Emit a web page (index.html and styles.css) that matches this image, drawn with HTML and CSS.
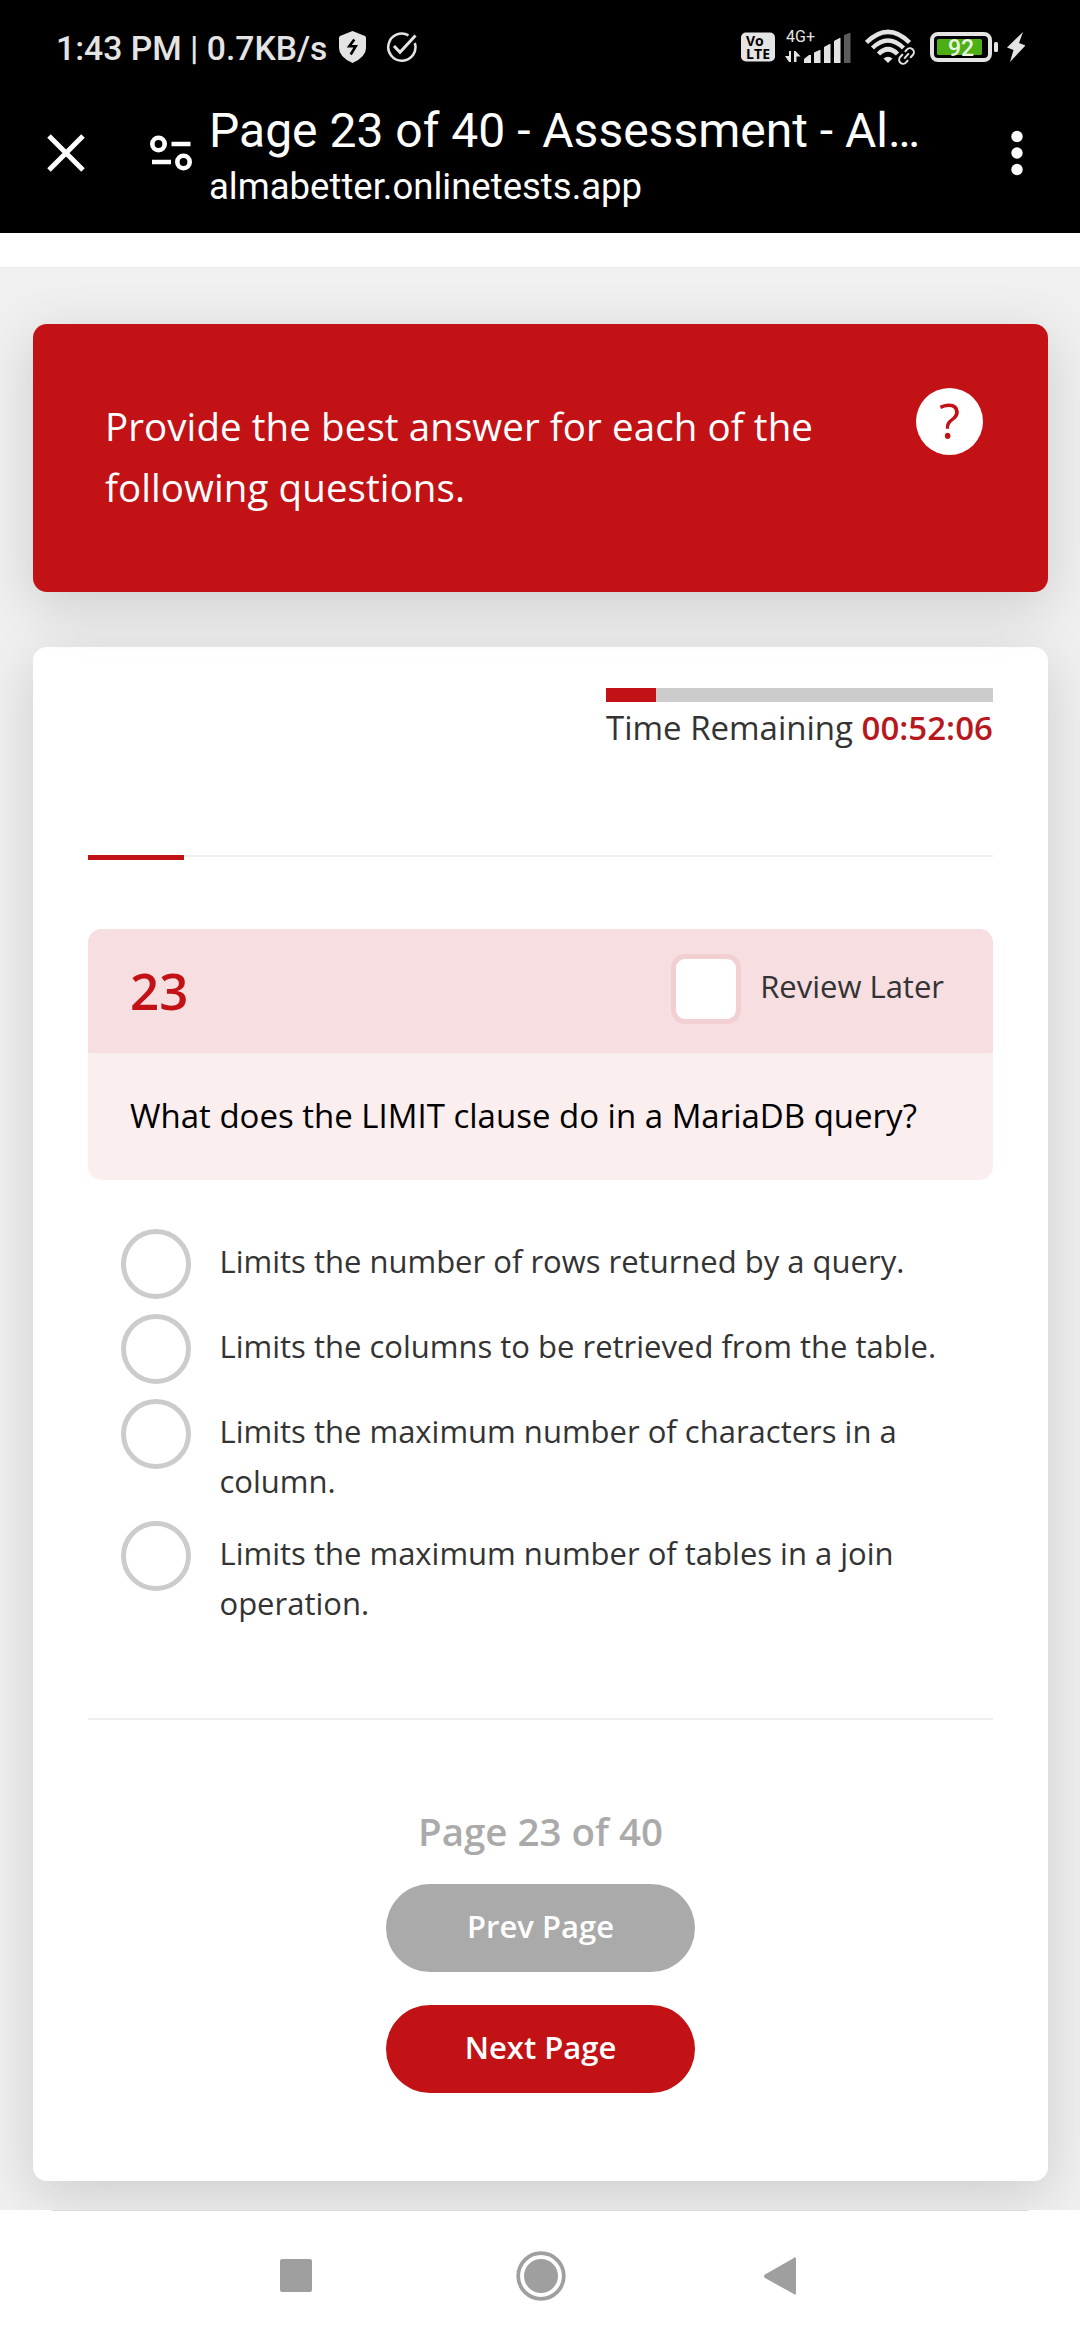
FILE: index.html
```
<!DOCTYPE html>
<html lang="en">
<head>
<meta charset="utf-8">
<title>Page 23 of 40 - Assessment</title>
<link rel="stylesheet" href="styles.css">
</head>
<body>
<div class="screen">
  <header class="browser">
    <div class="status">
      <span class="clock">1:43 PM | 0.7KB/s</span>
      <svg class="shield" width="27" height="32" viewBox="0 0 27 32"><path d="M13.500 0 26 5Q27 5.500 27 7V17Q27 26 13.500 32Q0 26 0 17V7Q0 5.500 1 5Z" fill="#e4e4e4"/><path d="M15.300 8.500 10.300 15.300H16.700L11.700 23.500" fill="none" stroke="#000" stroke-width="2.600"/></svg>
      <svg class="check" width="32" height="32" viewBox="0 0 32 32" fill="none" stroke="#e4e4e4" stroke-width="2.500"><path d="M22.500 4.300A13.600 13.600 0 1 0 28.800 12"/><path d="M8 15 14 21.300 29.500 4.500" stroke-width="3"/></svg>
      <svg class="volte" width="34" height="30" viewBox="0 0 34 30"><rect y=".5" width="34" height="29" rx="5" fill="#e4e4e4"/><text x="5" y="14" class="volte-text">Vo</text><text x="5" y="26.500" class="volte-text" textLength="24">LTE</text></svg>
      <svg class="signal" width="67" height="44" viewBox="0 -5 67 44" fill="#e4e4e4"><text x="1" y="12" class="net-text" textLength="29">4G+</text><path d="M4 21H6V32H4L0 26H4ZM9 21H10.500L15.500 26.500H11.500V32H9Z"/><path d="M19 33V29L24 25H26V33ZM29 33V22.500L34.500 20H35.500V33ZM39 33V17L44.500 14H45.500V33ZM49 33V11L54.500 8H55.500V33Z"/><path d="M59 33V5L64.500 3H65.500V33Z" fill="#5c5c5c"/></svg>
      <svg class="wifi" width="50" height="36" viewBox="0 0 50 36" fill="none" stroke="#e4e4e4" stroke-width="4.500"><path d="M1.500 13.500Q23 -8 44.500 13.500"/><path d="M7.500 19Q23 4 38.500 19"/><path d="M13.500 25Q23 15.500 32.500 25"/><path d="M23 34 18.500 29.500Q23 26 27.500 29.500Z" fill="#e4e4e4" stroke="none"/><g transform="translate(41.500 27) rotate(-48)"><path d="M-1 -4H-5A4 4 0 0 0 -5 4H-2M1 4H5A4 4 0 0 0 5 -4H2M-3.500 0H3.500" stroke="#000" stroke-width="6"/><path d="M-1 -4H-5A4 4 0 0 0 -5 4H-2M1 4H5A4 4 0 0 0 5 -4H2M-3.500 0H3.500" stroke-width="2"/></g></svg>
      <svg class="battery" width="68" height="30" viewBox="0 0 68 30"><rect x="2" y="2" width="58" height="26" rx="6" fill="none" stroke="#e4e4e4" stroke-width="4"/><rect x="7" y="7" width="45" height="16" rx="1.500" fill="#4caf16"/><rect x="64" y="10" width="4" height="10" rx="1.500" fill="#e4e4e4"/><text x="18" y="23.800" class="battery-text" textLength="26">92</text></svg>
      <svg class="bolt" width="18" height="30" viewBox="0 0 18 30"><path d="M16 0 0 15.500 6.500 18 3 30 18.500 13.500 12 11Z" fill="#e4e4e4"/></svg>
    </div>
    <div class="toolbar">
      <svg class="close" width="38" height="38" viewBox="0 0 38 38"><path d="M2 2 36 36M36 2 2 36" stroke="#fff" stroke-width="5"/></svg>
      <svg class="tune" width="42" height="36" viewBox="0 0 42 36" fill="none" stroke="#fff" stroke-width="4.600"><circle cx="8.500" cy="9" r="6.200"/><path d="M21.500 9H40.500M2 27H21"/><circle cx="33.500" cy="27" r="6.200"/></svg>
      <div class="page-info">
        <div class="page-title">Page 23 of 40 - Assessment - Al…</div>
        <div class="page-host">almabetter.onlinetests.app</div>
      </div>
      <svg class="more" width="12" height="46" viewBox="0 0 12 46" fill="#fff"><circle cx="6" cy="6.500" r="5.700"/><circle cx="6" cy="23" r="5.700"/><circle cx="6" cy="39.500" r="5.700"/></svg>
    </div>
  </header>
  <div class="strip"></div>
  <main class="content">
    <section class="intro">
      <p class="intro-text">Provide the best answer for each of the following questions.</p>
      <span class="help">?</span>
    </section>
    <section class="card">
      <div class="timer">
        <div class="timer-track"><div class="timer-fill"></div></div>
        <div class="timer-label">Time Remaining <b class="timer-value">00:52:06</b></div>
      </div>
      <div class="progress"><div class="progress-fill"></div></div>
      <div class="question">
        <div class="question-head">
          <span class="number">23</span>
          <span class="checkbox"></span>
          <span class="review">Review Later</span>
        </div>
        <div class="question-body">What does the LIMIT clause do in a MariaDB query?</div>
      </div>
      <ul class="options">
        <li class="option"><span class="radio"></span><span class="option-text">Limits the number of rows returned by a query.</span></li>
        <li class="option"><span class="radio"></span><span class="option-text">Limits the columns to be retrieved from the table.</span></li>
        <li class="option"><span class="radio"></span><span class="option-text">Limits the maximum number of characters in a column.</span></li>
        <li class="option"><span class="radio"></span><span class="option-text">Limits the maximum number of tables in a join operation.</span></li>
      </ul>
      <div class="pager">
        <div class="pager-label">Page 23 of 40</div>
        <div class="button button-prev">Prev Page</div>
        <div class="button button-next">Next Page</div>
      </div>
    </section>
  </main>
  <nav class="navbar">
    <svg width="34" height="36" viewBox="0 0 34 36"><rect x="1" y="1" width="32" height="33" rx="2" fill="#9f9f9f"/></svg>
    <svg class="home" width="50" height="50" viewBox="0 0 50 50"><circle cx="25" cy="25" r="22.800" fill="none" stroke="#9f9f9f" stroke-width="3.800"/><circle cx="25" cy="25" r="17" fill="#9f9f9f"/></svg>
    <svg width="34" height="38" viewBox="0 0 34 38"><path d="M30 1.500Q33 -1 33 2V36Q33 39 30 36.500L2 21Q0 19 2 17.500Z" fill="#9f9f9f"/></svg>
  </nav>
</div>
</body>
</html>
```
FILE: styles.css
```
* { box-sizing: border-box; margin: 0; padding: 0; }
svg { display: block; flex: none; }

.screen {
  width: 1080px;
  height: 2340px;
  display: flex;
  flex-direction: column;
  overflow: hidden;
  background: #f0f0f0;
  color: #333;
  font-family: "Open Sans", "Noto Sans", sans-serif;
}

/* Browser header */
.browser {
  position: relative;
  z-index: 3;
  flex: none;
  height: 233px;
  background: #000;
  color: #fff;
  font-family: Roboto, sans-serif;
}
.status { display: flex; align-items: center; height: 94px; padding: 0 55px 0 56px; }
.clock { width: 271px; padding-top: 3px; font-size: 33.7px; font-weight: 500; line-height: 40px; color: #e4e4e4; white-space: nowrap; }
.shield { margin-left: 12px; }
.check { margin-left: 20px; }
.volte { margin-left: auto; }
.signal { margin-left: 10px; }
.wifi { margin-left: 13px; }
.battery { margin-left: 15px; }
.bolt { margin-left: 9px; }
.volte-text { font: 700 14px "Open Sans", sans-serif; fill: #000; }
.net-text { font: 400 16px Roboto, sans-serif; }
.battery-text { font: 500 23px Roboto, sans-serif; fill: #eaf7e0; }

.toolbar { display: flex; align-items: center; height: 118px; padding: 0 57px 0 47px; }
.tune { margin-left: 65px; }
.page-info { flex: 1; align-self: flex-start; padding: 9px 0 0 17px; white-space: nowrap; }
.page-title { font-size: 48px; line-height: 56px; }
.page-host { margin-top: 6px; font-size: 36.5px; line-height: 44px; }

/* Page */
.strip { position: relative; z-index: 3; flex: none; height: 35px; background: #fff; border-bottom: 1px solid #eaeaea; }
.content { flex: 1; min-height: 0; padding: 56px 32px 0 33px; }
.intro, .card { position: relative; border-radius: 14px; box-shadow: 0 14px 55px rgba(0, 0, 0, .15); }
.intro {
  z-index: 2;
  display: flex;
  justify-content: space-between;
  height: 268px;
  padding: 64px 65px 0 72px;
  background: #c31216;
  color: #fff;
}
.intro-text { width: 730px; padding-top: 8px; font-size: 38.5px; line-height: 61px; letter-spacing: .08px; }
.help { width: 67px; height: 67px; border-radius: 50%; background: #fff; color: #c31216; font-size: 49px; font-weight: 500; line-height: 65px; text-align: center; }

.card { z-index: 1; height: 1534px; margin-top: 55px; padding: 41px 55px 0; background: #fff; }
.timer { width: 387px; margin-left: auto; }
.timer-track { height: 14px; background: #ccc; }
.timer-fill { width: 50px; height: 14px; background: #c31216; }
.timer-label { margin-top: 3px; font-size: 33px; line-height: 46px; white-space: nowrap; }
.timer-value { font-weight: 600; color: #b8181d; }
.progress { height: 5px; margin-top: 104px; background: linear-gradient(#eee 2px, transparent 2px); }
.progress-fill { width: 96px; height: 5px; background: #c31216; }

.question { margin-top: 69px; overflow: hidden; border-radius: 14px; background: #faeeee; }
.question-head { display: flex; align-items: flex-start; height: 124px; padding: 25px 49px 0 42px; background: #f6dee1; }
.number { margin-right: auto; font-size: 51px; font-weight: 600; line-height: 73px; color: #c31216; }
.checkbox { width: 70px; height: 70px; border: 5px solid #f2d0d2; border-radius: 14px; background: #fff; }
.review { margin-left: 19px; font-size: 31px; line-height: 64px; }
.question-body { height: 127px; padding: 38px 42px 0; font-size: 33px; line-height: 50px; color: #000; white-space: nowrap; }

.options { display: grid; gap: 15px; margin-top: 49px; padding-left: 33px; list-style: none; }
.option { display: flex; gap: 28.5px; }
.radio { flex: none; width: 70px; height: 70px; border: 5px solid #ccc; border-radius: 50%; }
.option-text { width: 730px; padding-top: 8px; font-size: 31px; line-height: 49.5px; }

.pager { display: flex; flex-direction: column; align-items: center; margin-top: 90px; padding-top: 84px; border-top: 2px solid #eee; }
.pager-label { font-size: 38.5px; font-weight: 600; line-height: 54px; color: #aaa; }
.button { width: 309px; height: 88px; margin-top: 33px; border-radius: 44px; color: #fff; font-size: 31px; font-weight: 600; line-height: 84px; text-align: center; }
.button-prev { margin-top: 26px; background: #aaa; }
.button-next { background: #c31216; }

/* System navigation */
.navbar {
  position: relative;
  z-index: 3;
  flex: none;
  display: flex;
  justify-content: space-between;
  align-items: center;
  height: 130px;
  padding: 1px 283px 0 279px;
  background: linear-gradient(#dadada, #dadada) 52px 0 / 976px 1px no-repeat #fff;
}
.home { margin-left: 5px; }
```
